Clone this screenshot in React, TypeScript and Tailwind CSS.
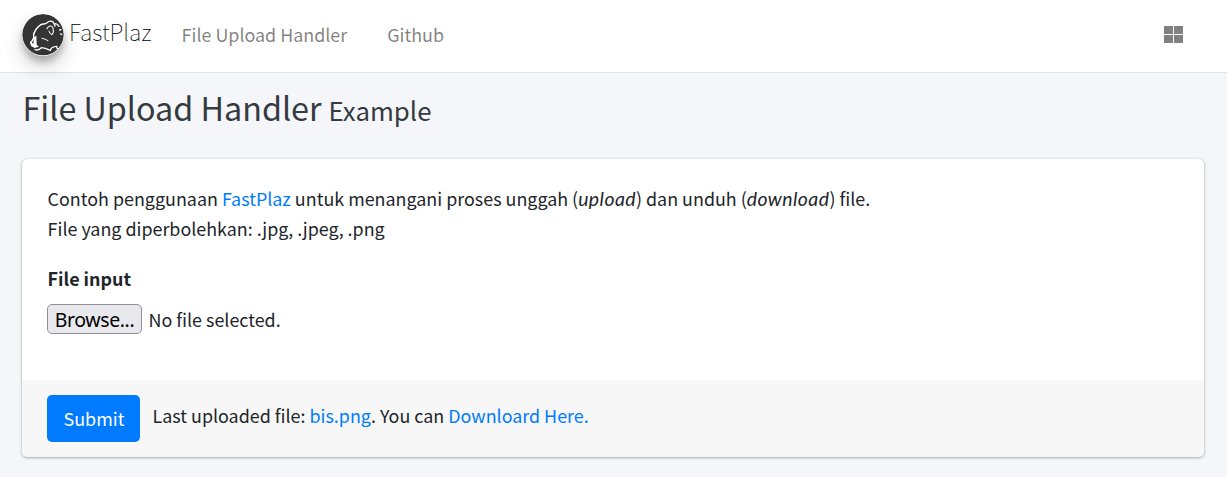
function Logo() {
  return (
    <svg viewBox="0 0 126 126" className="block size-[42px] rounded-full shadow-[0_10px_20px_rgba(0,0,0,0.19),0_6px_6px_rgba(0,0,0,0.2)]">
      <circle cx="63" cy="62" r="62" fill="#343434" />
      <g fill="none" stroke="#fff" strokeWidth="4.2" strokeLinecap="round" strokeLinejoin="round">
        <path d="M36 58 C40 48 47 38 57 32 C63 29 69 31 74 27 C80 21 89 19 94 25 C97 29 98 33 99 36" />
        <path d="M99 29 C104 29 108 32 111 37" />
        <path d="M36 58 C33 63 37 69 34 74 L26 88" />
        <path d="M75 44 C79 35 88 33 92 40 C95 48 94 57 90 62 C86 60 82 56 81 51" strokeWidth="3.2" />
        <path d="M60 73 L68 75 L78 80" strokeWidth="3" />
        <path d="M39 107 C47 110 54 106 58 101 C66 101 77 105 85 109 C86 101 92 98 105 97" />
        <path d="M113 48 L117 47 M116 60 L119 61 M104 101 L109 106" />
      </g>
      <path d="M24 80 L34 90 L36 69 L43 65 L44 92 L51 98 L38 102 L27 96 Z" fill="#fff" />
    </svg>
  );
}

export default function App() {
  return (
    <div className="min-h-[477px] bg-[#f4f6f9] font-['Noto_Sans_CJK_SC',sans-serif] text-[17.9px] leading-[30px] text-[#212529]">
      <header className="flex h-[73px] items-center border-b border-[#dee2e6] bg-white pr-[43px] pb-[3px] pl-[22px]">
        <Logo />
        <span className="mb-[7px] ml-[5px] w-[112.6px] text-[22.9px] font-thin text-black">FastPlaz</span>
        <nav className="mb-[2px] flex flex-1 gap-10 text-black/50">
          <a>File Upload Handler</a>
          <a>Github</a>
        </nav>
        <svg viewBox="0 0 21 18" className="h-[18px] w-[21px] fill-[#808080]">
          <path d="M1 0h9v8H1zM11 0h9v8h-9zM1 9h9v8H1zM11 9h9v8h-9z" />
        </svg>
      </header>
      <main className="px-[22px]">
        <h1 className="flex h-[86px] items-baseline gap-[7px] pt-[12px] pl-[0.5px] text-[32.3px] leading-[45px] text-[#343a40]">
          <span>File Upload Handler</span>
          <small className="text-[25.8px]">Example</small>
        </h1>
        <section className="h-[298px] w-[1182px] overflow-hidden rounded-[5px] bg-white shadow-[0_0_1px_rgba(0,0,0,0.25),0_1px_3px_rgba(0,0,0,0.3)]">
          <div className="h-[221px] px-[25.6px] pt-[24px]">
            <p className="mb-5">
              Contoh penggunaan <a className="text-[#007bff]">FastPlaz</a> untuk menangani proses unggah (<em className="font-['Lato',sans-serif] text-[19.4px] leading-none tracking-[0.45px]">upload</em>) dan unduh (<em className="font-['Lato',sans-serif] text-[19.4px] leading-none tracking-[0.45px]">download</em>) file.
              <br />
              File yang diperbolehkan: .jpg, .jpeg, .png
            </p>
            <label className="block font-bold">File input</label>
            <div className="mt-[11px] -ml-[0.6px] flex items-center gap-[6.5px]">
              <button className="h-[30px] w-[95px] rounded-[5px] border border-[#8f8f9d] bg-[#e9e9ed] pt-px font-['Noto_Sans',sans-serif] text-[19.5px] leading-[28px] tracking-[-0.4px] whitespace-nowrap text-black">Browse...</button>
              <span>No file selected.</span>
            </div>
          </div>
          <footer className="flex h-[77px] bg-[#f7f7f7] pt-[15px] pl-[25px]">
            <button className="h-[47px] w-[93px] rounded-[5px] bg-[#007bff] pb-[2px] pl-px text-white">Submit</button>
            <p className="mt-[5px] ml-[12.5px]">
              Last uploaded file: <a className="text-[#007bff]">bis.png</a>. You can <a className="text-[#007bff]">Downloard Here.</a>
            </p>
          </footer>
        </section>
      </main>
    </div>
  );
}
